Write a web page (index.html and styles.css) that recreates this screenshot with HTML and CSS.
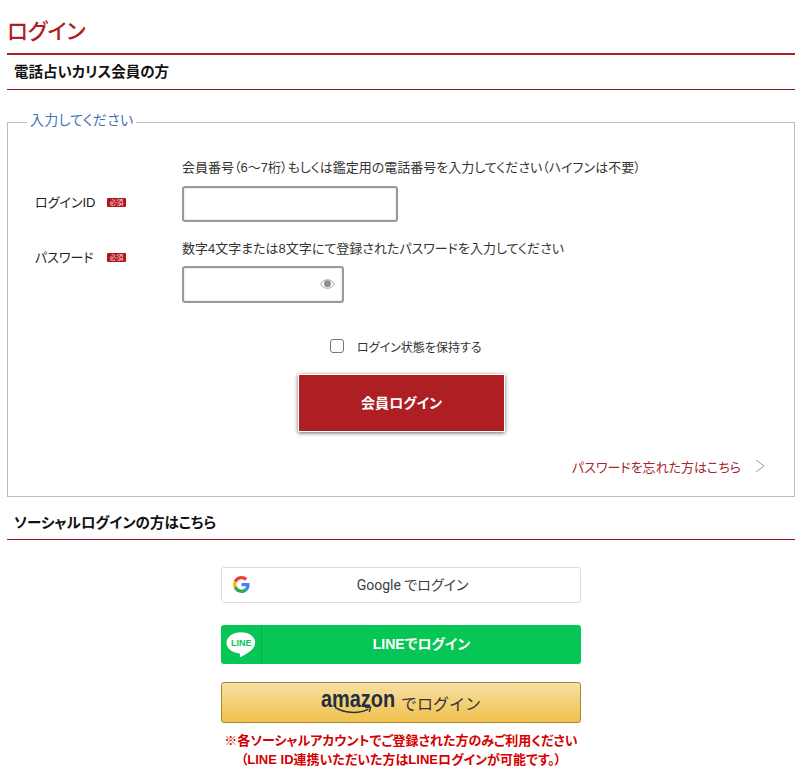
FILE: index.html
```html
<!DOCTYPE html>
<html lang="ja">
<head>
<meta charset="utf-8">
<title>ログイン</title>
<link rel="stylesheet" href="styles.css">
</head>
<body>
<main class="page">
  <h1 class="title">ログイン</h1>
  <h2 class="section section-first">電話占いカリス会員の方</h2>
  <fieldset class="box">
    <legend class="legend">入力してください</legend>
    <div class="row row-id">
      <div class="label"><span class="label-text">ログインID</span><span class="req">必須</span></div>
      <div class="field">
        <p class="hint">会員番号（6～7桁）もしくは鑑定用の電話番号を入力してください（ハイフンは不要）</p>
        <input class="input input-id" type="text" aria-label="ログインID">
      </div>
    </div>
    <div class="row row-pw">
      <div class="label"><span class="label-text">パスワード</span><span class="req">必須</span></div>
      <div class="field">
        <p class="hint hint-pw">数字4文字または8文字にて登録されたパスワードを入力してください</p>
        <div class="pw-wrap">
          <input class="input input-pw" type="password" aria-label="パスワード">
          <svg class="eye" viewBox="0 0 16 12" width="15" height="12" aria-hidden="true">
            <path d="M0.6 6C2.5 2.9 5 1.4 8 1.4S13.5 2.9 15.4 6C13.5 9.1 11 10.6 8 10.6S2.5 9.1 0.6 6Z" fill="#fff" stroke="#a3a3a3" stroke-width="1"/>
            <circle cx="8" cy="5.7" r="3.7" fill="#8f8f8f"/>
          </svg>
        </div>
      </div>
    </div>
    <label class="keep"><input class="check" type="checkbox"><span>ログイン状態を保持する</span></label>
    <div class="submit-wrap"><button class="submit" type="button">会員ログイン</button></div>
    <div class="forgot-wrap">
      <a class="forgot" href="#">パスワードを忘れた方はこちら</a>
      <svg class="chev" viewBox="0 0 10 14" width="10" height="14" aria-hidden="true"><path d="M1 1L9 7L1 13" fill="none" stroke="#999" stroke-width="1"/></svg>
    </div>
  </fieldset>
  <h2 class="section section-social">ソーシャルログインの方はこちら</h2>
  <div class="socials">
    <a class="social google" href="#">
      <svg class="g-icon" viewBox="0 0 48 48" width="17" height="17" aria-hidden="true">
        <path fill="#EA4335" d="M24 9.5c3.5 0 6.700 1.200 9.200 3.600l6.900-6.900C35.900 2.400 30.500 0 24 0 14.600 0 6.500 5.400 2.600 13.200l8 6.200C12.400 13.700 17.700 9.500 24 9.500z"/>
        <path fill="#4285F4" d="M46.900 24.500c0-1.600-.1-3.100-.4-4.500H24v9h12.900c-.6 3-2.200 5.500-4.800 7.200l7.700 6c4.500-4.200 7.100-10.300 7.100-17.700z"/>
        <path fill="#FBBC05" d="M10.500 28.600c-.5-1.400-.8-3-.8-4.600s.3-3.200.8-4.600l-8-6.200C.9 16.500 0 20.100 0 24s.9 7.500 2.600 10.800l7.900-6.200z"/>
        <path fill="#34A853" d="M24 48c6.500 0 11.900-2.100 15.900-5.800l-7.700-6c-2.200 1.400-4.900 2.300-8.200 2.300-6.300 0-11.600-4.200-13.500-10l-8 6.200C6.500 42.600 14.600 48 24 48z"/>
      </svg>
      <span class="google-text">Google でログイン</span>
    </a>
    <a class="social line" href="#">
      <span class="line-icon">
        <svg viewBox="0 0 32 32" width="30" height="27" preserveAspectRatio="none" aria-hidden="true">
          <path fill="#fff" d="M16 1.500C7.400 1.500.5 7.100.5 14c0 6.200 5.500 11.400 12.900 12.400.5.100 1.200.3 1.400.8.200.4.100 1 .1 1.400l-.2 1.300c-.1.400-.3 1.500 1.300.8 1.600-.7 8.600-5.100 11.800-8.700 2.100-2.400 3.200-5 3.200-8C31.500 7.100 24.600 1.500 16 1.500z"/>
        </svg>
        <span class="line-mark">LINE</span>
      </span>
      <span class="line-text">LINEでログイン</span>
    </a>
    <a class="social amazon" href="#">
      <span class="amazon-logo"><span class="amazon-word">amazon</span>
        <svg class="smile" viewBox="0 0 44 10" width="40" height="9" aria-hidden="true">
          <path d="M1 1.500C10 7.500 26 9.500 38 3.500" fill="none" stroke="#222f3e" stroke-width="1.600"/>
          <path d="M34.500 1.800L40.500 1.300L39 6.800" fill="none" stroke="#222f3e" stroke-width="1.500"/>
        </svg>
      </span>
      <span class="amazon-text">でログイン</span>
    </a>
    <p class="note">※各ソーシャルアカウントでご登録された方のみご利用ください<br>（LINE ID連携いただいた方はLINEログインが可能です。）</p>
  </div>
</main>
</body>
</html>
```
FILE: styles.css
```css
* { box-sizing: border-box; }
html, body { margin: 0; padding: 0; background: #fff; }
body {
  font-family: "Liberation Sans", "Noto Sans CJK JP", sans-serif;
  font-feature-settings: "palt";
  color: #333;
  font-size: 13px;
}
.page { padding: 0 8px 0 7px; height: 779px; overflow: hidden; }
.title {
  margin: 0;
  padding-top: 18px;
  height: 55px;
  border-bottom: 2px solid #ae1f23;
  color: #ae1f23;
  font-size: 21.5px;
  font-weight: 500;
  line-height: 28px;
}
.section {
  margin: 0;
  color: #111;
  font-size: 14.5px;
  font-weight: 700;
  line-height: 20px;
  padding-left: 7px;
  border-bottom: 1px solid #8c1a1c;
}
.section-first { height: 35px; padding-top: 7px; }
.section-social { height: 35px; margin-top: 8px; padding-top: 8px; }
.box {
  margin: 21px 0 0;
  padding: 0;
  height: 386px;
  border: 1px solid #bdbdbd;
  min-width: 0;
}
.legend {
  margin-left: 19px;
  padding: 0 3px 5px;
  color: #3f73b8;
  font-size: 14px;
  letter-spacing: .25px;
  line-height: 18px;
}
.row { display: flex; }
.row-id { padding-top: 24px; height: 105px; }
.row-pw { height: 80px; }
.label {
  width: 174px;
  padding-left: 27px;
  display: flex;
  align-items: center;
  height: 20px;
  flex: none;
  color: #222;
}
.row-id .label { margin-top: 33px; }
.row-pw .label { margin-top: 7px; }
.label-text { font-size: 13px; width: 72px; }
.req {
  display: inline-block;
  width: 19px;
  height: 9px;
  margin-top: 2px;
  background: #b01419;
  color: #f6d9d9;
  font-size: 7px;
  line-height: 9px;
  text-align: center;
  border-radius: 1px;
  overflow: hidden;
}
.hint { margin: 0 0 8px; font-size: 13px; line-height: 20px; color: #333; white-space: nowrap; }
.hint-pw { margin-bottom: 7px; }
.input {
  display: block;
  height: 36px;
  border: 2px solid #9a9a9a;
  border-radius: 3px;
  background: #fff;
  box-shadow: inset 0 0 2px #ccc;
  padding: 0 8px;
}
.input-id { width: 216px; }
.input-pw { width: 162px; height: 37px; }
.pw-wrap { position: relative; width: 162px; }
.eye { position: absolute; right: 9px; top: 12px; }
.keep {
  display: flex;
  align-items: center;
  margin: 18px 0 0 322px;
  height: 18px;
  font-size: 12px;
  color: #333;
}
.check {
  appearance: none;
  width: 14px;
  height: 14px;
  margin: 0 13px 0 0;
  border: 1px solid #767676;
  border-radius: 3px;
  background: #fff;
}
.submit-wrap { display: flex; margin: 19px 0 0 290px; }
.submit {
  width: 207px;
  height: 58px;
  padding: 0 0 3px;
  border: 1px solid #fff;
  background: #ae1f23;
  color: #fff;
  font: 700 14px "Liberation Sans", "Noto Sans CJK JP", sans-serif;
  font-feature-settings: "palt";
  box-shadow: 0 1px 4px rgba(0, 0, 0, .6);
}
.forgot-wrap {
  display: flex;
  justify-content: flex-end;
  align-items: center;
  gap: 14px;
  margin-top: 24px;
  padding-right: 29px;
  height: 20px;
}
.forgot { color: #a3262a; font-size: 13px; text-decoration: none; }
.socials { width: 360px; margin: 27px auto 0; }
.social {
  display: flex;
  align-items: center;
  text-decoration: none;
  border-radius: 3px;
}
.google {
  height: 36px;
  border: 1px solid #dcdcdc;
  padding-left: 11px;
  color: #3c4043;
  font-size: 14px;
  font-family: Roboto, "Noto Sans CJK JP", sans-serif;
}
.g-icon { flex: none; margin-top: -1px; }
.google-text { flex: 1; text-align: center; padding-right: 5px; margin-top: -2px; }
.line {
  height: 39px;
  margin-top: 22px;
  background: #06c755;
  color: #fff;
  font-weight: 700;
  font-size: 14px;
}
.line-icon {
  position: relative;
  flex: none;
  width: 41px;
  height: 39px;
  border-right: 1px solid #05b04b;
  display: flex;
  align-items: center;
  justify-content: center;
}
.line-mark {
  position: absolute;
  left: 10px;
  top: 13px;
  color: #06c755;
  font-size: 9px;
  font-weight: 700;
  line-height: 10px;
}
.line-text { flex: 1; text-align: center; margin-top: -3px; }
.amazon {
  height: 41px;
  margin-top: 18px;
  border: 1px solid #a88734;
  background: linear-gradient(#f7dfa5, #f0c14b);
  justify-content: center;
  color: #222;
}
.amazon-logo {
  position: relative;
  display: block;
  width: 74px;
  height: 28px;
  margin-right: 6px;
  margin-top: -3px;
}
.amazon-word {
  display: block;
  font-family: "Liberation Sans", sans-serif;
  font-weight: 700;
  font-size: 24px;
  line-height: 24px;
  color: #222f3e;
  transform: scaleX(.83);
  transform-origin: left top;
  white-space: nowrap;
}
.smile { position: absolute; left: 13px; top: 19px; }
.amazon-text { font-size: 16px; color: #333; font-feature-settings: normal; }
.note {
  margin: 8px 0 0;
  text-align: center;
  color: #d40000;
  font-size: 13px;
  font-weight: 700;
  line-height: 19px;
  white-space: nowrap;
}
```
